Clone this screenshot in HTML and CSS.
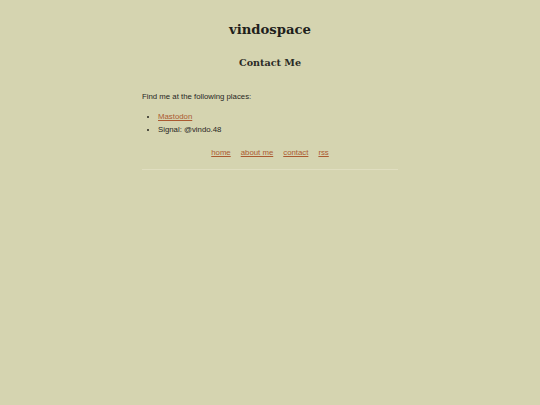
FILE: index.html
```html
<!DOCTYPE html>
<html>
<head>
<meta charset="utf-8">
<link rel="stylesheet" href="styles.css">
</head>
<body>
<div class="page">
  <header class="site-header">
    <h1 class="site-title">vindospace</h1>
  </header>
  <main class="content">
    <h2 class="page-title">Contact Me</h2>
    <p class="intro">Find me at the following places:</p>
    <ul class="places">
      <li><a href="#">Mastodon</a></li>
      <li>Signal: @vindo.48</li>
    </ul>
  </main>
  <nav class="site-nav">
    <a href="#">home</a>
    <a href="#">about me</a>
    <a href="#">contact</a>
    <a href="#">rss</a>
  </nav>
  <hr class="rule">
</div>
</body>
</html>
```
FILE: styles.css
```css
html, body {
  margin: 0;
  padding: 0;
  background: #d5d4b0;
}
body {
  font-family: "Liberation Sans", Arial, sans-serif;
  font-size: 7.8px;
  color: #26261f;
}
.page {
  width: 256px;
  margin: 0 auto;
  padding-top: 20px;
}
.site-title {
  font-family: "DejaVu Serif", serif;
  font-weight: bold;
  font-size: 13.2px;
  text-align: center;
  margin: 0;
  line-height: 20px;
  color: #1f1f1c;
}
.page-title {
  font-family: "DejaVu Serif", serif;
  font-weight: bold;
  font-size: 9.6px;
  text-align: center;
  margin: 13px 0 0;
  line-height: 20px;
  color: #2a2a25;
}
.intro {
  margin: 17px 0 0;
  line-height: 13px;
}
.places {
  margin: 7px 0 0;
  padding-left: 16px;
  line-height: 13px;
}
a {
  color: #ab5a30;
}
.site-nav {
  display: flex;
  justify-content: center;
  gap: 10px;
  margin-top: 10px;
  line-height: 13px;
}
.rule {
  border: 0;
  border-top: 1px solid #e0dec0;
  margin: 10px 0 0;
}
```
